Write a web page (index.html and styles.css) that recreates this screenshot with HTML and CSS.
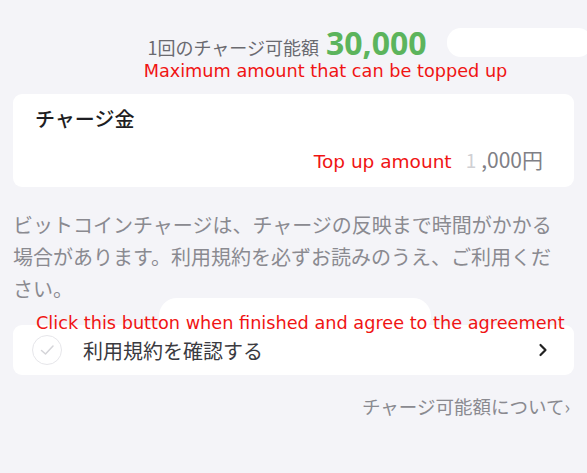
FILE: index.html
```html
<!DOCTYPE html>
<html lang="ja">
<head>
    <meta charset="UTF-8">
    <meta name="viewport" content="width=device-width, initial-scale=1.0">
    <title>チャージ</title>
    <link rel="stylesheet" href="styles.css">
</head>
<body>
    <main class="page">
        <!-- Charge limit -->
        <section class="limit">
            <div class="limit-line">
                <span class="limit-label">1回のチャージ可能額</span>
                <span class="limit-value">30,000</span>
            </div>
            <div class="note-red">Maximum amount that can be topped up</div>
            <div class="blot blot-top"></div>
        </section>

        <!-- Amount card -->
        <section class="card amount-card">
            <h2 class="card-title">チャージ金</h2>
            <div class="amount-row">
                <span class="note-red">Top up amount</span>
                <span class="amount-first">1</span>
                <span class="amount-rest">,000円</span>
            </div>
        </section>

        <p class="notice">ビットコインチャージは、チャージの反映まで時間がかかる場合があります。利用規約を必ずお読みのうえ、ご利用ください。</p>

        <!-- Terms row -->
        <section class="card terms-card">
            <div class="blot blot-mid"></div>
            <div class="note-red terms-note">Click this button when finished and agree to the agreement</div>
            <span class="check">
                <svg width="15" height="12" viewBox="0 0 15 12"><path d="M1.5 6.5 L5.5 10 L13 2" fill="none" stroke="#d4d4d8" stroke-width="1.5" stroke-linecap="round" stroke-linejoin="round"/></svg>
            </span>
            <span class="terms-label">利用規約を確認する</span>
            <svg class="chevron" width="10" height="14" viewBox="0 0 10 14"><path d="M2.5 2 L7.5 7 L2.5 12" fill="none" stroke="#222" stroke-width="2.2" stroke-linecap="round" stroke-linejoin="round"/></svg>
        </section>

        <div class="about">チャージ可能額について›</div>
    </main>
</body>
</html>
```

FILE: styles.css
```css
body {
    margin: 0;
    background-color: #f4f4f8;
    font-family: "Noto Sans CJK JP", "Noto Sans", sans-serif;
}
.page {
    padding: 0 13px;
    height: 473px;
    box-sizing: border-box;
}
.note-red {
    color: #f01414;
    font-family: "DejaVu Sans", "Noto Sans", sans-serif;
    font-size: 17px;
}
.blot {
    position: absolute;
    background: #fff;
    border-radius: 14px;
}
.limit {
    position: relative;
    text-align: center;
    padding-top: 26px;
}
.limit-line {
    display: flex;
    justify-content: center;
    align-items: baseline;
    gap: 7px;
    margin-left: -13px;
    height: 34px;
}
.limit-label {
    color: #6a6a70;
    font-size: 18px;
}
.limit-value {
    color: #5cb45c;
    font-family: "Open Sans", "Noto Sans", sans-serif;
    font-weight: 700;
    font-size: 32px;
    line-height: 34px;
}
.limit .note-red {
    font-size: 17.7px;
    line-height: 22px;
    margin-left: 64px;
}
.blot-top {
    left: 434px;
    top: 28px;
    width: 145px;
    height: 29px;
}
.card {
    background: #fff;
    border-radius: 9px;
}
.amount-card {
    margin-top: 12px;
    height: 93px;
    padding: 0 31px 0 22px;
    box-sizing: border-box;
}
.card-title {
    margin: 0;
    padding-top: 11px;
    font-size: 20px;
    font-weight: 500;
    color: #1e1e22;
    line-height: 28px;
}
.amount-row {
    display: flex;
    justify-content: flex-end;
    align-items: baseline;
    margin-top: 11px;
}
.amount-row .note-red {
    font-size: 18.5px;
}
.amount-first {
    color: #d0d0d4;
    font-size: 19px;
    margin-left: 14px;
}
.amount-rest {
    color: #808086;
    font-size: 21px;
    margin-left: 5px;
}
.notice {
    margin: 22px 0 0;
    width: 550px;
    color: #8a8a90;
    font-size: 20px;
    line-height: 32px;
}
.terms-card {
    position: relative;
    margin-top: 20px;
    height: 50px;
    display: flex;
    align-items: center;
    padding: 0 26px 0 19px;
    box-sizing: border-box;
}
.blot-mid {
    left: 146px;
    top: -27px;
    width: 272px;
    height: 36px;
    border-radius: 18px;
}
.terms-note {
    position: absolute;
    left: 23px;
    top: -14px;
    font-size: 17.7px;
    line-height: 24px;
    white-space: nowrap;
}
.check {
    width: 30px;
    height: 30px;
    border: 1px solid #e6e6ea;
    border-radius: 50%;
    box-sizing: border-box;
    display: flex;
    align-items: center;
    justify-content: center;
}
.terms-label {
    margin-left: 21px;
    color: #3a3a40;
    font-size: 20px;
    flex: 1;
}
.about {
    margin-top: 18px;
    text-align: right;
    padding-right: 4px;
    color: #8a8a90;
    font-size: 18.5px;
}
```
